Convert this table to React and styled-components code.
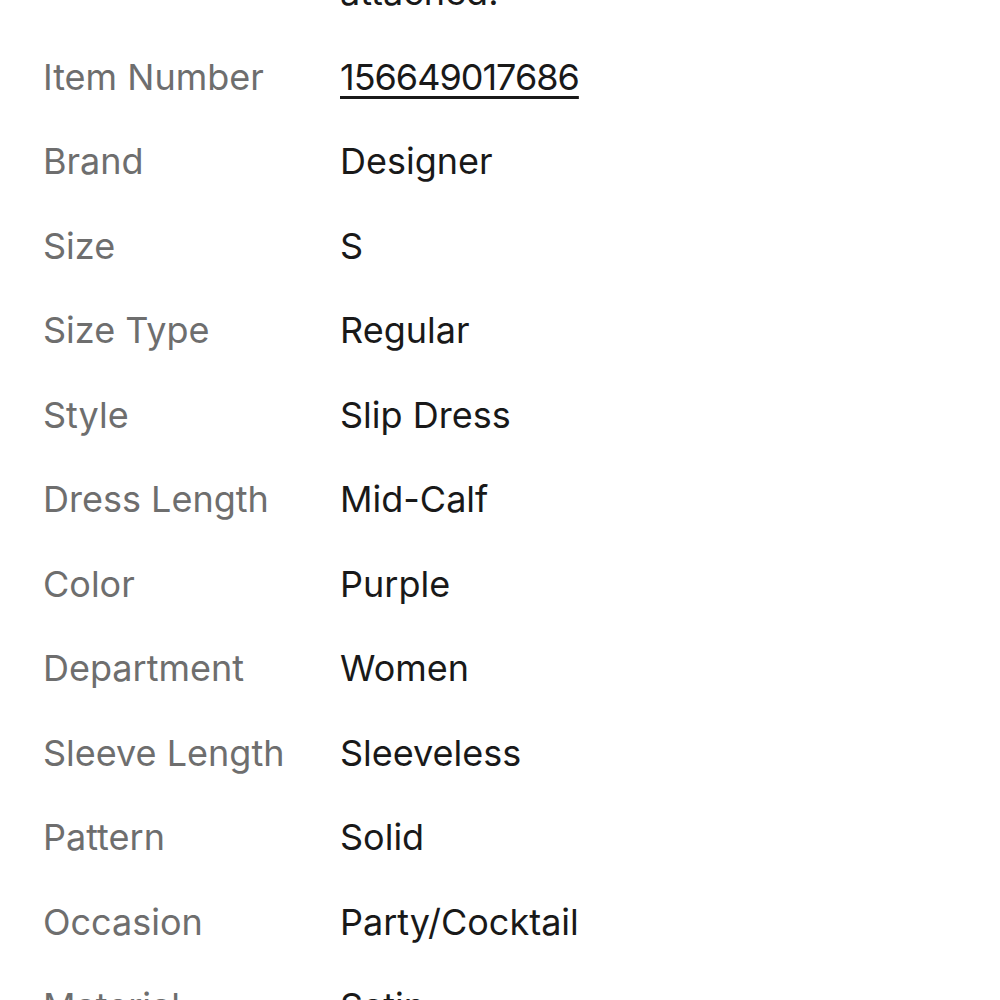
import React from 'react';
import styled, { createGlobalStyle } from 'styled-components';

const specifics = [
  { label: '', value: 'attached.' },
  { label: 'Item Number', value: '156649017686', link: true },
  { label: 'Brand', value: 'Designer' },
  { label: 'Size', value: 'S' },
  { label: 'Size Type', value: 'Regular' },
  { label: 'Style', value: 'Slip Dress' },
  { label: 'Dress Length', value: 'Mid-Calf' },
  { label: 'Color', value: 'Purple' },
  { label: 'Department', value: 'Women' },
  { label: 'Sleeve Length', value: 'Sleeveless' },
  { label: 'Pattern', value: 'Solid' },
  { label: 'Occasion', value: 'Party/Cocktail' },
  { label: 'Material', value: 'Satin' },
];

export default function App() {
  return (
    <>
      <GlobalStyle />
      <Page>
        <SpecList>
          {specifics.map((s, i) => (
            <Row key={i}>
              <Label>{s.label}</Label>
              <Value $link={s.link}>{s.value}</Value>
            </Row>
          ))}
        </SpecList>
      </Page>
    </>
  );
}

const GlobalStyle = createGlobalStyle`
  html, body {
    margin: 0;
    padding: 0;
    background: #fff;
    overflow: hidden;
  }
  body {
    font-family: Inter, "Liberation Sans", sans-serif;
  }
`;

const Page = styled.main`
  width: 1000px;
  height: 1000px;
  overflow: hidden;
  background: #fff;
`;

const SpecList = styled.dl`
  margin: -50px 0 0;
  padding: 0 0 0 43px;
`;

const Row = styled.div`
  display: grid;
  grid-template-columns: 297px 1fr;
  padding: 20px 0;
  font-size: 36px;
  line-height: 44.5px;
`;

const Label = styled.dt`
  color: #6e6e6e;
  margin: 0;
`;

const Value = styled.dd`
  color: #191919;
  margin: 0;
  letter-spacing: ${p => (p.$link ? '-1px' : 'normal')};
  text-decoration: ${p => (p.$link ? 'underline' : 'none')};
  text-decoration-thickness: 3px;
  text-underline-offset: 6px;
`;
